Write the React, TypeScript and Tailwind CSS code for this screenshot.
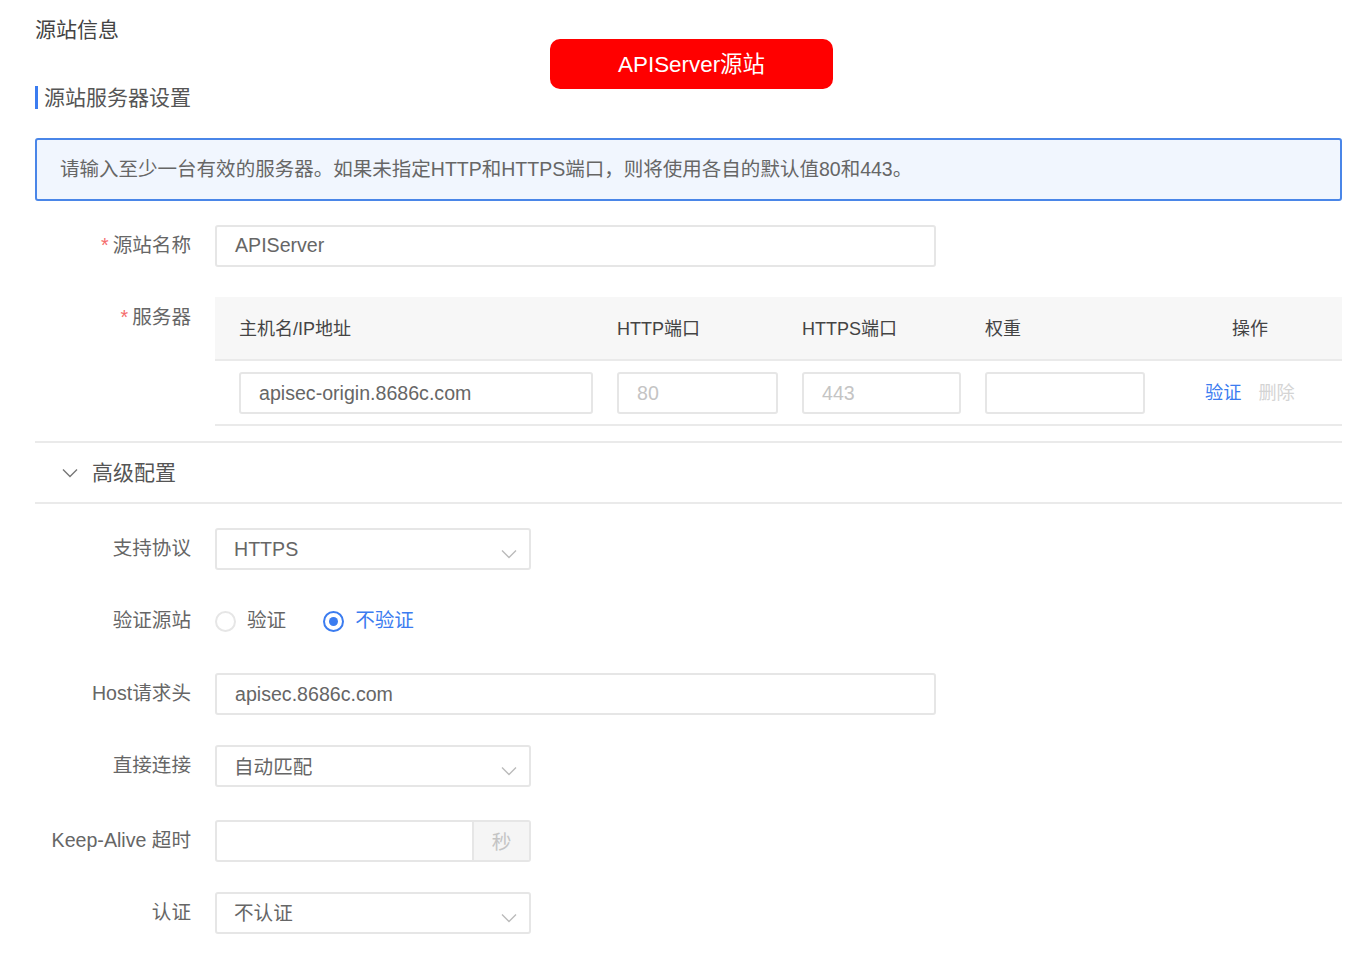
const font = '[font-family:"Liberation_Sans","Noto_Sans_CJK_SC",sans-serif]';

function Chevron({ className }: { className: string }) {
  return (
    <svg className={className} viewBox="0 0 16 10" fill="none" stroke="currentColor" strokeWidth="1.4">
      <path d="M1 1.5 8 8.5 15 1.5" />
    </svg>
  );
}

function Field({ label, required, className, children }: { label: string; required?: boolean; className: string; children: React.ReactNode }) {
  return (
    <div className={`flex items-start ${className}`}>
      <label className="w-[156px] shrink-0 pr-0 text-right text-[19.6px] leading-[40px] text-[#666]">
        {required && <span className="mr-1 text-[#f56c6c]">*</span>}
        {label}
      </label>
      <div className="ml-6">{children}</div>
    </div>
  );
}

function Select({ value, cjk }: { value: string; cjk?: boolean }) {
  return (
    <div className={`flex h-[42px] w-[316px] items-center justify-between rounded-[3px] border-2 border-[#e6e6e6] bg-white pl-[17px] pr-[12px] text-[19.6px] text-[#666] ${cjk ? "pt-1" : "pt-[2px]"}`}>
      <span>{value}</span>
      <Chevron className={`h-[10px] w-[16px] text-[#bbb] ${cjk ? "mt-[6px]" : "mt-2"}`} />
    </div>
  );
}

function TextBox({ value, className, muted }: { value?: string; className: string; muted?: boolean }) {
  return (
    <div className={`flex h-[42px] items-center rounded-[3px] border-2 border-[#e6e6e6] bg-white pl-[18px] text-[19.6px] ${muted ? "text-[#c4c4c4]" : "text-[#666]"} ${className}`}>
      {value}
    </div>
  );
}

export default function App() {
  return (
    <div className={`relative h-[954px] w-[1364px] overflow-hidden bg-white pl-[35px] pr-[22px] ${font}`}>
      <h2 className="pt-[17px] text-[21px] leading-[26px] text-[#444]">源站信息</h2>

      {/* annotation over the form */}
      <div className="absolute left-[550px] top-[39px] flex h-[50px] w-[283px] items-center justify-center rounded-[10px] bg-[#ff0000] pt-[2px] text-[22.4px] text-white">
        APIServer源站
      </div>

      <h3 className="mt-[43px] h-[23px] border-l-[3px] border-[#3b7cf0] pl-[6px] text-[21px] leading-[23px] text-[#555]">
        源站服务器设置
      </h3>

      <div className="mt-[29px] flex h-[63px] items-center rounded-[3px] border-2 border-[#4a86e8] bg-[#f1f6fe] pl-[23px] text-[19.53px] text-[#666]">
        请输入至少一台有效的服务器。如果未指定HTTP和HTTPS端口，则将使用各自的默认值80和443。
      </div>

      <Field label="源站名称" required className="mt-6">
        <TextBox value="APIServer" className="w-[721px]" />
      </Field>

      <div className="mt-[30px] flex items-start">
        <label className="w-[156px] shrink-0 text-right text-[19.6px] leading-[40px] text-[#666]">
          <span className="mr-1 text-[#f56c6c]">*</span>服务器
        </label>
        <div className="ml-6 w-[1127px] text-[19.6px]">
          <div className="grid h-[64px] grid-cols-[402px_185px_183px_220px_1fr] items-center border-b-2 border-[#eaeaea] bg-[#f7f7f7] pt-[2px] text-[18px] text-[#444]">
            <span className="pl-6">主机名/IP地址</span>
            <span>HTTP端口</span>
            <span>HTTPS端口</span>
            <span>权重</span>
            <span className="w-[90px] text-center">操作</span>
          </div>
          <div className="grid h-[65px] grid-cols-[402px_185px_183px_220px_1fr] items-center border-b-2 border-[#eaeaea]">
            <div className="pl-6">
              <TextBox value="apisec-origin.8686c.com" className="w-[354px] pt-[2px]" />
            </div>
            <TextBox value="80" muted className="w-[161px] pt-[2px]" />
            <TextBox value="443" muted className="w-[159px] pt-[2px]" />
            <TextBox className="w-[160px]" />
            <div className="flex gap-[17px] pt-[2px] text-[18.2px]">
              <span className="text-[#3b7cf0]">验证</span>
              <span className="text-[#d4d4d4]">删除</span>
            </div>
          </div>
        </div>
      </div>

      <div className="mt-[15px] flex h-[63px] items-center border-y-2 border-[#eaeaea] pl-[27px] text-[21px] text-[#555]">
        <Chevron className="h-[10px] w-[16px] text-[#777]" />
        <span className="ml-[14px]">高级配置</span>
      </div>

      <Field label="支持协议" className="mt-6">
        <Select value="HTTPS" />
      </Field>

      <Field label="验证源站" className="mt-[30px]">
        <div className="flex h-[42px] items-center text-[19.6px]">
          <span className="h-[21px] w-[21px] rounded-full border-2 border-[#e6e6e6]" />
          <span className="ml-[11px] text-[#666]">验证</span>
          <span className="ml-[37px] flex h-[21px] w-[21px] items-center justify-center rounded-full border-2 border-[#3b7cf0]">
            <span className="h-[9px] w-[9px] rounded-full bg-[#3b7cf0]" />
          </span>
          <span className="ml-[11px] text-[#3b7cf0]">不验证</span>
        </div>
      </Field>

      <Field label="Host请求头" className="mt-[31px]">
        <TextBox value="apisec.8686c.com" className="w-[721px] pt-[2px]" />
      </Field>

      <Field label="直接连接" className="mt-[30px]">
        <Select value="自动匹配" cjk />
      </Field>

      <Field label="Keep-Alive 超时" className="mt-[33px]">
        <div className="flex h-[42px] w-[316px] rounded-[3px] border-2 border-[#e6e6e6] bg-white">
          <div className="flex-1" />
          <div className="flex w-[57px] items-center justify-center border-l-2 border-[#e6e6e6] bg-[#f5f5f5] pt-1 text-[19.6px] text-[#c4c4c4]">
            秒
          </div>
        </div>
      </Field>

      <Field label="认证" className="mt-[30px]">
        <Select value="不认证" />
      </Field>
    </div>
  );
}
